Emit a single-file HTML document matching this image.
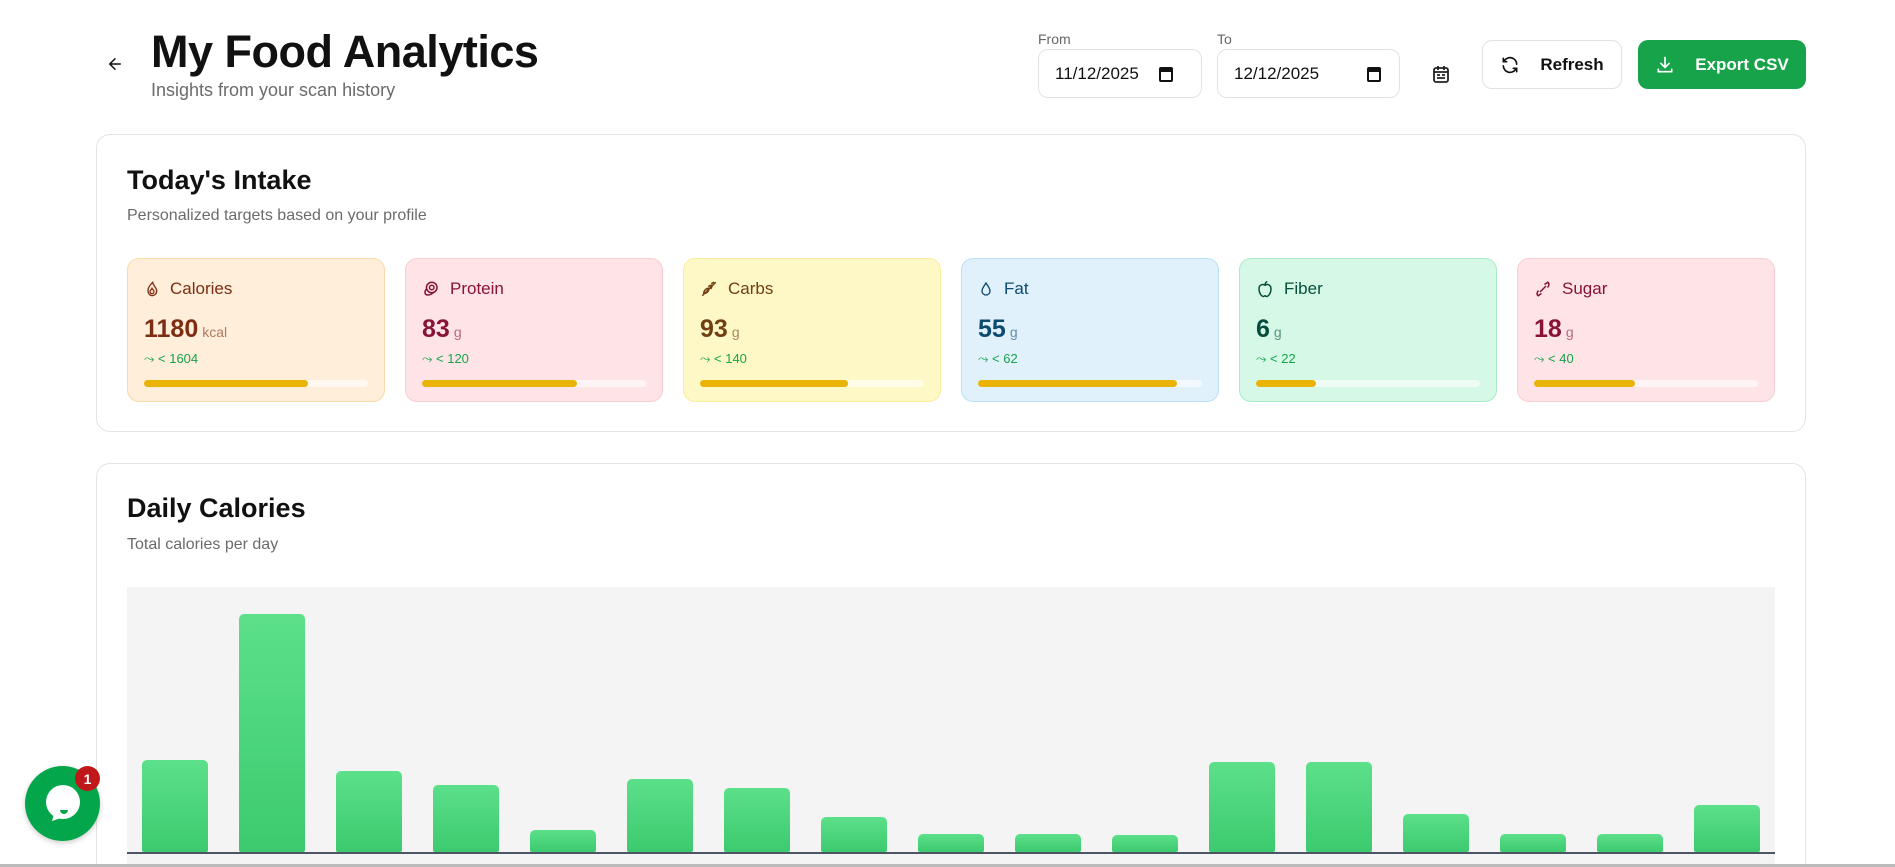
<!DOCTYPE html>
<html style="height:867px;overflow:hidden"><head><meta charset="utf-8"><style>
*{box-sizing:border-box;margin:0;padding:0}
body{width:1895px;height:867px;overflow:hidden;background:#fff;font-family:"Liberation Sans",sans-serif;color:#111;position:relative}
.abs{position:absolute}
.title{left:151px;top:26px;font-size:45px;font-weight:700;letter-spacing:-0.5px}
.sub{left:151px;top:80px;font-size:18px;color:#6b6b6b}
.lbl{font-size:14px;color:#666}
.inp{border:1px solid #e2e2e2;border-radius:10px;height:49px;font-size:17px;display:flex;align-items:center;padding-left:16px;gap:20px;background:#fff}
.btn{border-radius:10px;height:49px;display:flex;align-items:center;justify-content:center;gap:20px;font-size:17px;font-weight:700}
.card{border:1px solid #e3e3e3;border-radius:14px;background:#fff}
.h2{font-size:27px;font-weight:700}
.p{font-size:16px;color:#6b6b6b}
.tile{position:absolute;top:258px;width:258px;height:144px;border-radius:12px;border:1px solid}
.tile .l{position:absolute;left:16px;top:20px;font-size:17px;display:flex;align-items:center;gap:10px}
.tile .v{position:absolute;left:16px;top:56px;font-size:25px;font-weight:700}
.tile .v span{font-size:14px;font-weight:400;opacity:.6;margin-left:4px}
.tile .t{position:absolute;left:16px;top:92px;font-size:13px;color:#16a34a;display:flex;align-items:center;gap:6px}
.tile .bar{position:absolute;left:16px;right:16px;top:121px;height:7px;border-radius:4px;background:rgba(255,255,255,.6)}
.tile .bar i{display:block;height:7px;border-radius:4px;background:#eab308}
.b{position:absolute;width:66px;bottom:12px;border-radius:5px 5px 2px 2px;background:linear-gradient(#5ce08a,#3dca6e)}
</style></head><body>
<svg class="abs" style="left:106px;top:55px" width="18" height="18" viewBox="0 0 24 24" fill="none" stroke="#111" stroke-width="2" stroke-linecap="round"><path d="M19 12H5M12 19l-7-7 7-7"/></svg>
<div class="abs title">My Food Analytics</div>
<div class="abs sub">Insights from your scan history</div>

<div class="abs lbl" style="left:1038px;top:31px">From</div>
<div class="abs inp" style="left:1038px;top:49px;width:164px">11/12/2025 <svg width="14" height="16" viewBox="0 0 14 16"><rect x="1" y="2" width="12" height="13" rx="1" fill="none" stroke="#111" stroke-width="2"/><rect x="1" y="2" width="12" height="4" fill="#111"/></svg></div>
<div class="abs lbl" style="left:1217px;top:31px">To</div>
<div class="abs inp" style="left:1217px;top:49px;width:183px">12/12/2025 <span style="flex:1"></span><svg style="margin-right:18px" width="14" height="16" viewBox="0 0 14 16"><rect x="1" y="2" width="12" height="13" rx="1" fill="none" stroke="#111" stroke-width="2"/><rect x="1" y="2" width="12" height="4" fill="#111"/></svg></div>
<svg class="abs" style="left:1432px;top:64px" width="18" height="20" viewBox="0 0 18 20" fill="none" stroke="#222" stroke-width="1.8"><rect x="2" y="4" width="14" height="14" rx="2"/><path d="M6 2v4M12 2v4M2 8h14M5 11h3M10 11h3M5 14h8"/></svg>
<div class="abs btn" style="left:1482px;top:40px;width:140px;border:1px solid #e2e2e2;background:#fff">
<svg width="20" height="20" viewBox="0 0 24 24" fill="none" stroke="#111" stroke-width="2" stroke-linecap="round"><path d="M20 11a8 8 0 0 0-14.5-4.5L4 8M4 4v4h4M4 13a8 8 0 0 0 14.5 4.5L20 16M20 20v-4h-4"/></svg>Refresh</div>
<div class="abs btn" style="left:1638px;top:40px;width:168px;background:#16a34a;color:#fff">
<svg width="20" height="20" viewBox="0 0 24 24" fill="none" stroke="#fff" stroke-width="2" stroke-linecap="round"><path d="M12 3v12M7 10l5 5 5-5M4 17v3h16v-3"/></svg>Export CSV</div>

<div class="abs card" style="left:96px;top:134px;width:1710px;height:298px"></div>
<div class="abs h2" style="left:127px;top:165px">Today's Intake</div>
<div class="abs p" style="left:127px;top:207px">Personalized targets based on your profile</div>

<div class="tile" style="left:127px;background:#feeeda;border-color:#fcd9a8;color:#7c2d12"><div class="l"><svg width="16" height="18" viewBox="0 0 24 24" fill="none" stroke="#7c2d12" stroke-width="2"><path d="M12 22c4 0 7-3 7-7 0-5-5-8-6-13-3 3-7 7-7 12 0 5 3 8 6 8z"/><path d="M12 19a3 3 0 0 1-3-3c0-2 2-3 3-5 1 2 3 3 3 5a3 3 0 0 1-3 3z"/></svg>Calories</div><div class="v">1180<span>kcal</span></div><div class="t">⤳ &lt; 1604</div><div class="bar"><i style="width:73%"></i></div></div>
<div class="tile" style="left:405px;background:#fee4e6;border-color:#fbcdd2;color:#881337"><div class="l"><svg width="18" height="18" viewBox="0 0 24 24" fill="none" stroke="#881337" stroke-width="2"><circle cx="13" cy="10" r="7"/><circle cx="13" cy="10" r="3"/><path d="M6 12c-3 3-3 8 2 8 3 0 6-2 8-4"/></svg>Protein</div><div class="v">83<span>g</span></div><div class="t">⤳ &lt; 120</div><div class="bar"><i style="width:69%"></i></div></div>
<div class="tile" style="left:683px;background:#fef8c6;border-color:#fbee99;color:#713f12"><div class="l"><svg width="18" height="18" viewBox="0 0 24 24" fill="none" stroke="#713f12" stroke-width="2"><path d="M3 21L21 3M7 13c2-2 5-2 5-2s0 3-2 5-5 2-5 2 0-3 2-5zM11 9c2-2 5-2 5-2s0 3-2 5M15 5c1-1 4-2 4-2"/></svg>Carbs</div><div class="v">93<span>g</span></div><div class="t">⤳ &lt; 140</div><div class="bar"><i style="width:66%"></i></div></div>
<div class="tile" style="left:961px;background:#e0f1fc;border-color:#b9e0f8;color:#0c4a6e"><div class="l"><svg width="16" height="18" viewBox="0 0 24 24" fill="none" stroke="#0c4a6e" stroke-width="2"><path d="M12 3c3 5 6 8 6 12a6 6 0 0 1-12 0c0-4 3-7 6-12z"/></svg>Fat</div><div class="v">55<span>g</span></div><div class="t">⤳ &lt; 62</div><div class="bar"><i style="width:89%"></i></div></div>
<div class="tile" style="left:1239px;background:#d6f8e6;border-color:#a7ecc6;color:#064e3b"><div class="l"><svg width="18" height="18" viewBox="0 0 24 24" fill="none" stroke="#064e3b" stroke-width="2"><path d="M12 7c-3-2-8-1-8 5 0 5 3 10 6 10 1 0 1-1 2-1s1 1 2 1c3 0 6-5 6-10 0-6-5-7-8-5zM12 7c0-2 1-4 3-5"/></svg>Fiber</div><div class="v">6<span>g</span></div><div class="t">⤳ &lt; 22</div><div class="bar"><i style="width:27%"></i></div></div>
<div class="tile" style="left:1517px;background:#fee4e6;border-color:#fbcdd2;color:#881337"><div class="l"><svg width="18" height="18" viewBox="0 0 24 24" fill="none" stroke="#881337" stroke-width="2"><path d="M8 16l8-8M6 14c-2 2-3 6 0 7 1-2 3-2 4-3M18 10c2-2 3-6 0-7-1 2-3 2-4 3"/></svg>Sugar</div><div class="v">18<span>g</span></div><div class="t">⤳ &lt; 40</div><div class="bar"><i style="width:45%"></i></div></div>

<div class="abs card" style="left:96px;top:463px;width:1710px;height:420px"></div>
<div class="abs h2" style="left:127px;top:493px">Daily Calories</div>
<div class="abs p" style="left:127px;top:536px">Total calories per day</div>
<div class="abs" style="left:127px;top:587px;width:1648px;height:277px;background:#f3f4f3;overflow:hidden">
<div class="abs" style="left:0;right:0;top:265px;height:2px;background:#4b5563"></div>
<div class="b" style="left:15px;height:92px"></div>
<div class="b" style="left:112px;height:238px"></div>
<div class="b" style="left:209px;height:81px"></div>
<div class="b" style="left:306px;height:67px"></div>
<div class="b" style="left:403px;height:22px"></div>
<div class="b" style="left:500px;height:73px"></div>
<div class="b" style="left:597px;height:64px"></div>
<div class="b" style="left:694px;height:35px"></div>
<div class="b" style="left:791px;height:18px"></div>
<div class="b" style="left:888px;height:18px"></div>
<div class="b" style="left:985px;height:17px"></div>
<div class="b" style="left:1082px;height:90px"></div>
<div class="b" style="left:1179px;height:90px"></div>
<div class="b" style="left:1276px;height:38px"></div>
<div class="b" style="left:1373px;height:18px"></div>
<div class="b" style="left:1470px;height:18px"></div>
<div class="b" style="left:1567px;height:47px"></div>
</div>
<div class="abs" style="left:0;top:864px;width:1895px;height:3px;background:#bbb"></div>

<div class="abs" style="left:25px;top:766px;width:75px;height:75px;border-radius:50%;background:#04a64c;box-shadow:0 2px 6px rgba(0,0,0,.2)"></div>
<svg class="abs" style="left:44px;top:784px" width="38" height="40" viewBox="0 0 38 40"><circle cx="19" cy="18" r="17" fill="#fff"/><path d="M10 30l-2 7 12-4z" fill="#fff"/><path d="M16 26h8a4 4 0 0 1-8 0z" fill="#04a64c"/></svg>
<div class="abs" style="left:75px;top:766px;width:25px;height:25px;border-radius:50%;background:#c0171a;color:#fff;font-size:14px;font-weight:700;display:flex;align-items:center;justify-content:center">1</div>
</body></html>
